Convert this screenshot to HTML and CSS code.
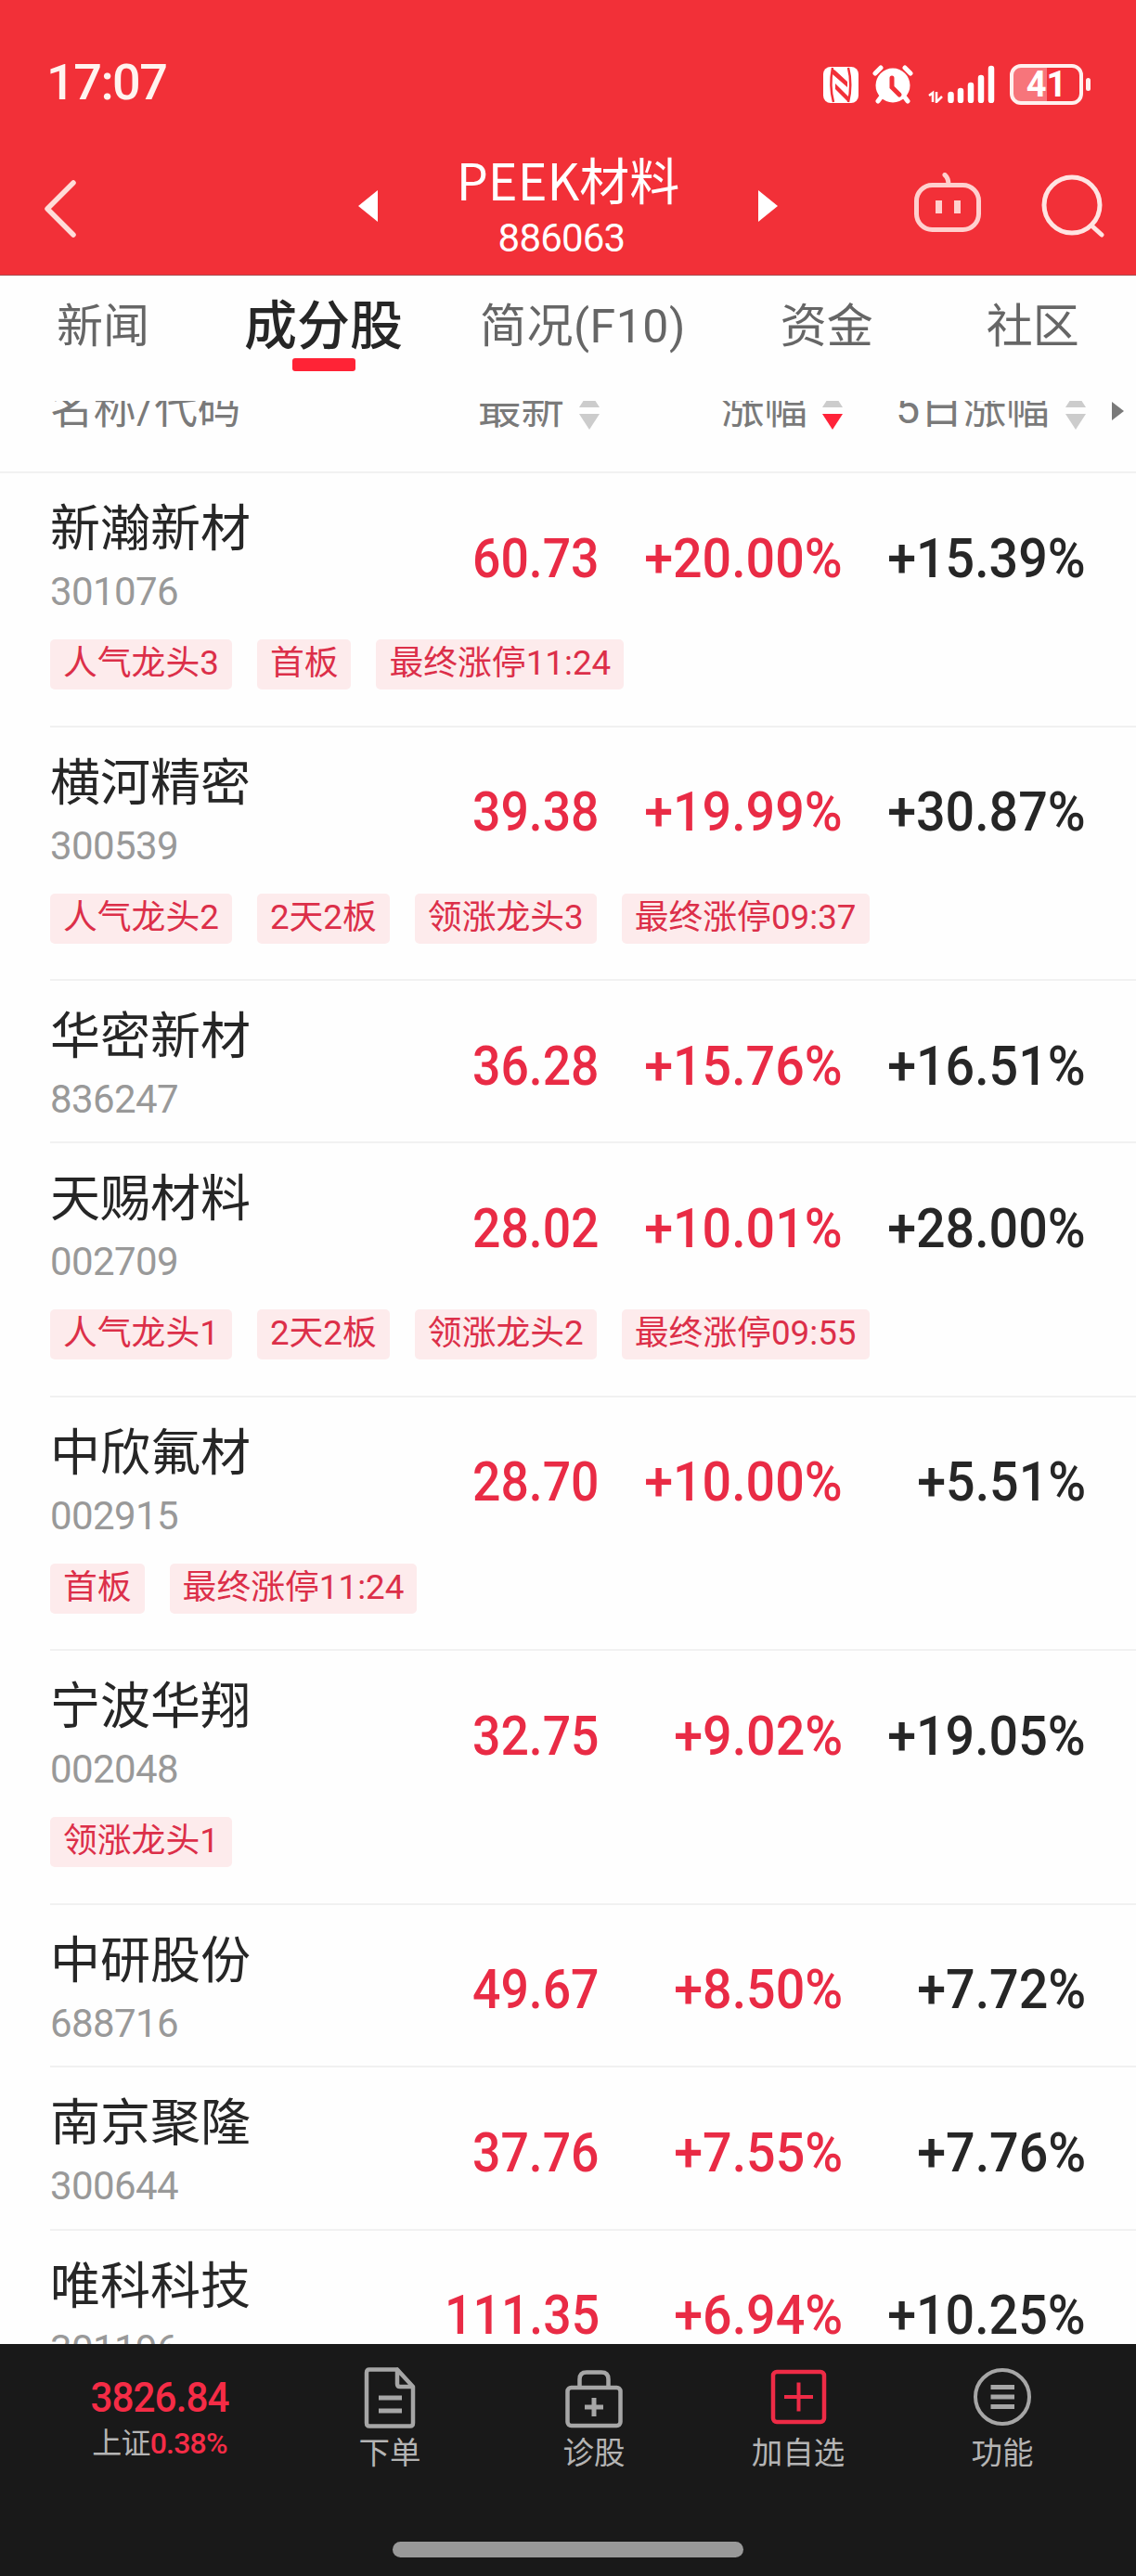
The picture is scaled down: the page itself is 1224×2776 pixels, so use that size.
FILE: index.html
```html
<!DOCTYPE html>
<html lang="zh-CN">
<head>
    <meta charset="UTF-8">
    <meta name="viewport" content="width=device-width, initial-scale=1.0">
    <title>PEEK材料 886063</title>
    <link rel="stylesheet" href="styles.css">
</head>
<body>
    <header class="header">
        <div class="status-bar">
            <span class="time">17:07</span>
            <div class="status-icons">
                <svg class="nfc" width="38" height="39" viewBox="0 0 38 39">
                    <rect width="38" height="39" rx="8" fill="#fff"/>
                    <path d="M10 2 V8 L26 22 V16 L13 4 Z M13 18 L27 32 V38 L13 24 Z" fill="#f23038"/>
                    <path d="M10 1 C8 12 8 27 11 38 M27 1 C30 12 30 27 27 38" fill="none" stroke="#f23038" stroke-width="2.500"/>
                </svg>
                <svg class="alarm" width="44" height="42" viewBox="0 0 44 42">
                    <path d="M3 9 L9 3 M41 9 L35 3 M9 35 L6 39 M35 35 L38 39" stroke="#fff" stroke-width="5" stroke-linecap="round"/>
                    <circle cx="22" cy="22" r="18.500" fill="#fff"/>
                    <path d="M21 14 V24 L29 32" fill="none" stroke="#f23038" stroke-width="5" stroke-linecap="round"/>
                </svg>
                <svg class="signal" width="72" height="41" viewBox="0 0 72 41">
                    <path d="M5 40 V30 L1 33 M9 29 V40 L15 34" fill="none" stroke="#fff" stroke-width="2.5"/>
                    <path d="M24.500 32 V38 M35 28 V38 M46 22 V38 M57 14 V38 M68 4 V38" stroke="#fff" stroke-width="6.500" stroke-linecap="round"/>
                </svg>
                <div class="battery"><span>41</span></div>
            </div>
        </div>
        <nav class="title-bar">
            <svg class="back" width="36" height="62" viewBox="0 0 36 62">
                <path d="M32 3 L4 31 L32 59" fill="none" stroke="#ffdcd8" stroke-width="5.500" stroke-linecap="round" stroke-linejoin="round"/>
            </svg>
            <svg class="prev" width="21" height="34" viewBox="0 0 21 34"><path d="M0 17 L21 0 V34 Z" fill="#fff"/></svg>
            <div class="title">
                <h1>PEEK材料</h1>
                <p>886063</p>
            </div>
            <svg class="next" width="21" height="34" viewBox="0 0 21 34"><path d="M21 17 L0 0 V34 Z" fill="#fff"/></svg>
            <svg class="robot" width="72" height="64" viewBox="0 0 72 64">
                <g fill="none" stroke="#ffd0ce" stroke-width="5">
                    <rect x="2.500" y="13.500" width="67" height="48" rx="17"/>
                    <path d="M33 2.500 Q37 6 37 13" stroke-linecap="round"/>
                </g>
                <path d="M23 30 h7 v14 h-7 Z M43 30 h7 v14 h-7 Z" fill="#ffd0ce"/>
            </svg>
            <svg class="search" width="68" height="68" viewBox="0 0 68 68">
                <g fill="none" stroke="#ffe4e2" stroke-width="5">
                    <circle cx="33" cy="33" r="30"/>
                    <path d="M54 55 L65 65" stroke-linecap="round"/>
                </g>
            </svg>
        </nav>
    </header>

    <nav class="tabs">
        <a>新闻</a>
        <a class="active">成分股</a>
        <a>简况(F10)</a>
        <a>资金</a>
        <a>社区</a>
    </nav>

    <div class="table-head">
        <div class="table-head-inner">
            <span class="col-name">名称/代码</span>
            <span class="col-price">最新</span>
            <i class="sort"></i>
            <span class="col-change">涨幅</span>
            <i class="sort desc"></i>
            <span class="col-five">5日涨幅</span>
            <i class="sort"></i>
            <i class="more"></i>
        </div>
    </div>

    <main class="list">
        <section class="row">
            <div class="main">
                <div class="stock"><h2>新瀚新材</h2><p>301076</p></div>
                <span class="price up">60.73</span><span class="num up">+20.00%</span><span class="num">+15.39%</span>
            </div>
            <div class="tags"><span>人气龙头3</span><span>首板</span><span>最终涨停11:24</span></div>
        </section>
        <section class="row">
            <div class="main">
                <div class="stock"><h2>横河精密</h2><p>300539</p></div>
                <span class="price up">39.38</span><span class="num up">+19.99%</span><span class="num">+30.87%</span>
            </div>
            <div class="tags"><span>人气龙头2</span><span>2天2板</span><span>领涨龙头3</span><span>最终涨停09:37</span></div>
        </section>
        <section class="row">
            <div class="main">
                <div class="stock"><h2>华密新材</h2><p>836247</p></div>
                <span class="price up">36.28</span><span class="num up">+15.76%</span><span class="num">+16.51%</span>
            </div>
        </section>
        <section class="row">
            <div class="main">
                <div class="stock"><h2>天赐材料</h2><p>002709</p></div>
                <span class="price up">28.02</span><span class="num up">+10.01%</span><span class="num">+28.00%</span>
            </div>
            <div class="tags"><span>人气龙头1</span><span>2天2板</span><span>领涨龙头2</span><span>最终涨停09:55</span></div>
        </section>
        <section class="row">
            <div class="main">
                <div class="stock"><h2>中欣氟材</h2><p>002915</p></div>
                <span class="price up">28.70</span><span class="num up">+10.00%</span><span class="num">+5.51%</span>
            </div>
            <div class="tags"><span>首板</span><span>最终涨停11:24</span></div>
        </section>
        <section class="row">
            <div class="main">
                <div class="stock"><h2>宁波华翔</h2><p>002048</p></div>
                <span class="price up">32.75</span><span class="num up">+9.02%</span><span class="num">+19.05%</span>
            </div>
            <div class="tags"><span>领涨龙头1</span></div>
        </section>
        <section class="row">
            <div class="main">
                <div class="stock"><h2>中研股份</h2><p>688716</p></div>
                <span class="price up">49.67</span><span class="num up">+8.50%</span><span class="num">+7.72%</span>
            </div>
        </section>
        <section class="row">
            <div class="main">
                <div class="stock"><h2>南京聚隆</h2><p>300644</p></div>
                <span class="price up">37.76</span><span class="num up">+7.55%</span><span class="num">+7.76%</span>
            </div>
        </section>
        <section class="row">
            <div class="main">
                <div class="stock"><h2>唯科科技</h2><p>301196</p></div>
                <span class="price up">111.35</span><span class="num up">+6.94%</span><span class="num">+10.25%</span>
            </div>
        </section>
    </main>

    <footer class="bottom-bar">
        <div class="actions">
            <div class="index">
                <strong>3826.84</strong>
                <p>上证<em>0.38%</em></p>
            </div>
            <a>
                <svg width="66" height="66" viewBox="0 0 66 66" fill="none" stroke="#a6a6a6" stroke-width="4.500" stroke-linejoin="round">
                    <path d="M41 2.500 H11 Q8 2.500 8 6 V60 Q8 63.500 11 63.500 H55 Q58 63.500 58 60 V21 L41 2.500 V18 Q41 21 44 21 H58"/>
                    <path d="M21 33 H46 M21 47 H46" stroke-width="5"/>
                </svg>
                <span>下单</span>
            </a>
            <a>
                <svg width="66" height="66" viewBox="0 0 66 66" fill="none" stroke="#a6a6a6" stroke-width="4.500">
                    <rect x="4.500" y="22" width="57" height="41" rx="4"/>
                    <path d="M17.500 22 V13 Q17.500 5.500 25 5.500 H41 Q48.500 5.500 48.500 13 V22"/>
                    <path d="M23 43 H43 M33 33 V53" stroke-width="5"/>
                </svg>
                <span>诊股</span>
            </a>
            <a>
                <svg width="66" height="66" viewBox="0 0 66 66" fill="none" stroke="#ee2b46" stroke-width="4.500">
                    <rect x="6" y="5" width="55" height="54" rx="4"/>
                    <path d="M18 32 H49 M33.500 16.500 V47.500" stroke-width="4"/>
                </svg>
                <span>加自选</span>
            </a>
            <a>
                <svg width="66" height="66" viewBox="0 0 66 66" fill="none" stroke="#a6a6a6" stroke-width="4">
                    <circle cx="33" cy="32" r="29"/>
                    <path d="M20.500 21.500 H46 M20.500 32 H46 M20.500 42.500 H46" stroke-width="5"/>
                </svg>
                <span>功能</span>
            </a>
        </div>
        <div class="home-indicator"></div>
    </footer>
</body>
</html>
```
FILE: styles.css
```css
* {
    box-sizing: border-box;
    margin: 0;
    padding: 0;
}
body {
    width: 1224px;
    height: 2776px;
    display: flex;
    flex-direction: column;
    overflow: hidden;
    background: #fefefe;
    color: #262626;
    font-family: Roboto, "Noto Sans CJK SC", sans-serif;
}
svg {
    display: block;
    flex: none;
}

/* header */
.header {
    height: 297px;
    flex: none;
    background: #f23038;
    border-bottom: 1px solid #a84a50;
    color: #fff;
}
.status-bar {
    display: flex;
    justify-content: space-between;
    padding: 56px 49px 0 50px;
    height: 150px;
}
.time {
    font-size: 54px;
    font-weight: 500;
    line-height: 66px;
    letter-spacing: -1.5px;
    color: #fff3ef;
}
.status-icons {
    display: flex;
    align-items: flex-start;
    padding-top: 13px;
}
.nfc {
    margin-top: 3px;
}
.alarm {
    margin: 1px 0 0 15px;
}
.signal {
    margin: 1px 0 0 16px;
}
.battery {
    position: relative;
    width: 79px;
    height: 44px;
    margin: 0 8px 0 16px;
    border: 4px solid #fff0ee;
    border-radius: 12px;
    background: linear-gradient(to right, #f7757b 50%, #f23038 50%);
    font-size: 38px;
    font-weight: 700;
    line-height: 36px;
    text-align: center;
}
.battery::after {
    content: "";
    position: absolute;
    left: 78px;
    top: 11px;
    width: 5px;
    height: 14px;
    border-radius: 3px;
    background: #fff0ee;
}
.title-bar {
    display: flex;
    align-items: flex-start;
    padding-left: 47px;
}
.back {
    margin-top: 44px;
}
.prev {
    margin: 55px 0 0 303px;
}
.title {
    width: 410px;
    padding-top: 13px;
    text-align: center;
}
.title h1 {
    font-family: "Noto Sans CJK SC", sans-serif;
    font-size: 54px;
    font-weight: 400;
    line-height: 60px;
}
.title p {
    margin-top: 9px;
    padding-right: 14px;
    font-size: 42px;
    line-height: 50px;
    letter-spacing: -0.8px;
}
.next {
    margin-top: 55px;
}
.robot {
    margin: 36px 0 0 147px;
}
.search {
    margin: 38px 0 0 65px;
}

/* tabs */
.tabs {
    display: flex;
    flex: none;
    height: 135px;
    padding: 22px 0 0 61px;
    font-size: 50px;
    line-height: 66px;
    color: #666;
}
.tabs a {
    white-space: nowrap;
}
.tabs a:nth-child(3) {
    margin-left: 83px;
    letter-spacing: 0.5px;
}
.tabs a:nth-child(4) {
    margin-left: 102px;
}
.tabs a:nth-child(5) {
    margin-left: 122px;
}
.tabs .active {
    position: relative;
    margin-left: 102px;
    font-size: 57px;
    font-weight: 500;
    color: #262626;
}
.tabs .active::after {
    content: "";
    position: absolute;
    left: 52px;
    top: 67px;
    width: 68px;
    height: 14px;
    border-radius: 3px;
    background: #ff2336;
}

/* column titles, half scrolled under the tabs */
.table-head {
    display: flex;
    flex: none;
    align-items: flex-start;
    height: 78px;
    overflow: hidden;
    border-bottom: 2px solid #f1f1f1;
}
.table-head-inner {
    display: flex;
    flex: none;
    align-items: center;
    width: 100%;
    height: 60px;
    margin-top: -22px;
    padding-left: 54px;
    font-size: 46.500px;
    line-height: 60px;
    color: #7a7a7a;
}
.table-head span {
    white-space: nowrap;
}
.col-name {
    width: 461px;
}
.col-price {
    width: 93px;
}
.col-change {
    width: 93px;
    margin-left: 131px;
}
.col-five {
    width: 167px;
    margin-left: 57px;
}
.sort {
    display: flex;
    flex-direction: column;
    gap: 7px;
    width: 22px;
    margin: 5px 0 0 16px;
}
.sort::before {
    content: "";
    border: 11px solid transparent;
    border-top: 0;
    border-bottom: 17px solid #ccc;
}
.sort::after {
    content: "";
    border: 11px solid transparent;
    border-bottom: 0;
    border-top: 17px solid #ccc;
}
.sort.desc::after {
    border-top-color: #ff2339;
}
.more {
    margin: 5px 0 0 28px;
    border: 10px solid transparent;
    border-left: 13px solid #7a7a7a;
    border-right: 0;
}

/* stock list */
.list {
    height: 2016px;
    flex: none;
    overflow: hidden;
    padding-left: 54px;
}
.row {
    height: 175.400px;
    padding-top: 30px;
    border-bottom: 2px solid #f1f1f1;
}
.row:has(.tags) {
    height: 273.500px;
}
.main {
    display: grid;
    grid-template-columns: 333px 259px 262px 262px;
    align-items: center;
}
.stock h2 {
    font-size: 54px;
    font-weight: 400;
    line-height: 62px;
}
.stock p {
    margin-top: 11px;
    font-size: 42px;
    line-height: 50px;
    letter-spacing: -0.6px;
    color: #999;
}
.price,
.num {
    justify-self: end;
    font-size: 59px;
    font-weight: 500;
    line-height: 66px;
    transform: scaleX(0.907);
    transform-origin: right;
}
.num {
    transform: scaleX(0.942);
}
.up {
    color: #e92b45;
}
.tags {
    display: flex;
    gap: 27px;
    margin-top: 26px;
}
.tags span {
    height: 54px;
    padding: 0 14px;
    border-radius: 5px;
    background: #fdebec;
    font-size: 36.800px;
    line-height: 51px;
    color: #dc2f49;
    white-space: nowrap;
}

/* bottom toolbar */
.bottom-bar {
    height: 250px;
    flex: none;
    background: #191919;
}
.actions {
    display: grid;
    grid-template-columns: 276px repeat(4, 220px);
    height: 213px;
    padding: 25px 0 0 34px;
}
.actions a {
    display: flex;
    flex-direction: column;
    align-items: center;
    font-size: 33.500px;
    line-height: 42px;
    color: #b4b4b4;
}
.actions a span {
    margin-top: 6px;
}
.index {
    padding-top: 8px;
    text-align: center;
}
.index strong {
    display: block;
    font-size: 44px;
    font-weight: 500;
    line-height: 50px;
    letter-spacing: -1px;
    color: #f52c46;
    transform: scaleX(0.96);
}
.index p {
    margin-top: 4px;
    font-size: 32px;
    line-height: 40px;
    letter-spacing: -0.8px;
    color: #b4b4b4;
}
.index em {
    font-style: normal;
    font-weight: 500;
    color: #f52c46;
}
.home-indicator {
    width: 378px;
    height: 17px;
    margin: 0 auto;
    border-radius: 9px;
    background: #999;
}
```
